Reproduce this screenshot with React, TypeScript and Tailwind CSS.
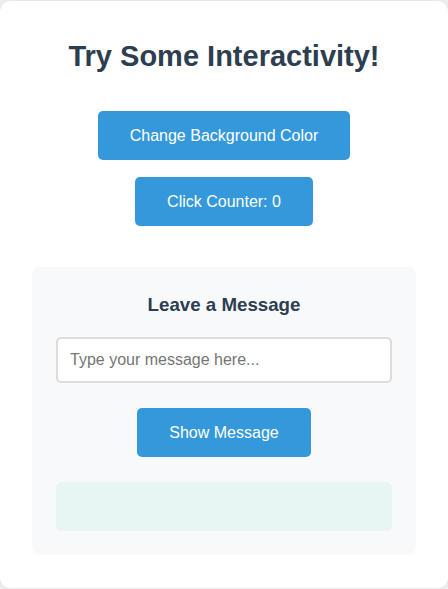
import { useState } from 'react';

export default function App() {
  const [count, setCount] = useState(0);
  const [text, setText] = useState('');
  const [shown, setShown] = useState('');

  return (
    <div className="min-h-screen bg-[#eeeeee] pt-px font-['Liberation_Sans',Arial,sans-serif]">
      <div className="w-[448px] h-[587px] bg-white rounded-[10px] px-8 pt-[38px] shadow-[0_0_4px_rgba(0,0,0,0.06)]">
        <h1 className="text-[29px] leading-8 font-bold text-[#2c3e50] text-center mt-px">Try Some Interactivity!</h1>

        <div className="flex flex-col items-center mt-[39px] gap-[17px]">
          <button className="h-[49px] px-8 bg-[#3498db] text-white text-base rounded-[5px]">
            Change Background Color
          </button>
          <button
            onClick={() => setCount(count + 1)}
            className="h-[49px] px-8 bg-[#3498db] text-white text-base rounded-[5px]"
          >
            Click Counter: {count}
          </button>
        </div>

        <div className="mt-[41px] bg-[#f8f9fa] rounded-lg p-6">
          <h3 className="text-[18.72px] leading-[22px] font-bold text-[#2c3e50] text-center mt-[3px]">Leave a Message</h3>
          <input
            value={text}
            onChange={(e) => setText(e.target.value)}
            placeholder="Type your message here..."
            className="mt-[21px] w-full h-[46px] border-2 border-[#dddddd] rounded-[5px] bg-white px-3 text-base text-[#333] placeholder:text-[#757575] outline-none"
          />
          <div className="flex justify-center mt-[25px]">
            <button
              onClick={() => setShown(text)}
              className="h-[49px] px-8 bg-[#3498db] text-white text-base rounded-[5px]"
            >
              Show Message
            </button>
          </div>
          <div className="mt-[25px] h-[49px] bg-[#e8f6f3] rounded-[5px] px-3 flex items-center text-[#2c3e50]">
            {shown}
          </div>
        </div>
      </div>
    </div>
  );
}
